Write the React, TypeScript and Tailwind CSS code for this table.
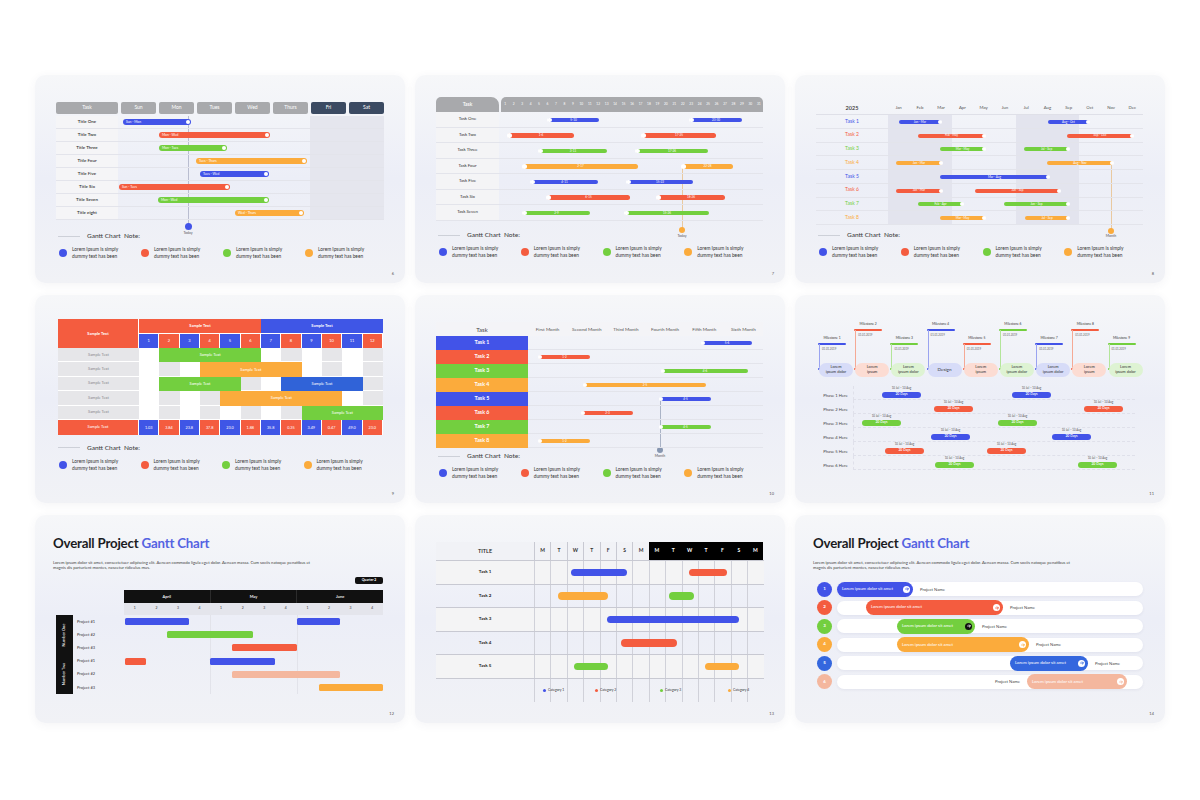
import React from 'react';

const BLUE = 'bg-[#4253e8]';
const RED = 'bg-[#f45c3f]';
const GREEN = 'bg-[#73cf3f]';
const ORANGE = 'bg-[#fbab3c]';
const PEACH = 'bg-[#f4b79e]';
const LEGEND = [BLUE, RED, GREEN, ORANGE];

type Span = { x: number; w: number; c: string; t?: string };

function Card({ page, children }: { page: string; children: React.ReactNode }) {
  return (
    <div className="relative h-[208px] w-[370px] overflow-hidden rounded-[10px] bg-linear-to-b from-[#f6f7f9] via-[#eceef7] to-[#f1f2f6] shadow-[0_2px_10px_rgba(60,60,110,0.06)]">
      {children}
      <span className="absolute bottom-[6px] right-[11px] text-[4px] text-[#555]">{page}</span>
    </div>
  );
}

function Note({ className = '' }: { className?: string }) {
  return (
    <div className={className}>
      <div className="flex h-[8px] items-center">
        <div className="ml-[2px] h-px w-[22px] bg-[#cdd0d8]" />
        <span className="ml-[7px] text-[6.5px] font-medium text-[#444]">Gantt Chart&nbsp; Note:</span>
      </div>
      <div className="mt-[6px] flex">
        {LEGEND.map((c, i) => (
          <div key={i} className="flex w-[83px] items-center gap-[5px] pl-[3px]">
            <span className={`h-[8px] w-[8px] shrink-0 rounded-full ${c}`} />
            <span className="text-[4.8px] leading-[7px] text-[#333]">
              Lorem Ipsum is simply
              <br />
              dummy text has been
            </span>
          </div>
        ))}
      </div>
    </div>
  );
}

function Arrow({ className = '' }: { className?: string }) {
  return (
    <svg viewBox="0 0 10 10" className={className}>
      <path d="M2.6 5h4.6M5.4 3l2 2-2 2" fill="none" stroke="currentColor" strokeWidth="1.3" strokeLinecap="round" strokeLinejoin="round" />
    </svg>
  );
}

/* ---------- slide 6 : week days ---------- */
function WeekSlide() {
  const days = ['Sun', 'Mon', 'Tues', 'Wed', 'Thurs', 'Fri', 'Sat'];
  const rows: [string, Span][] = [
    ['Title One', { x: 88, w: 68, c: BLUE, t: 'Sun - Mon' }],
    ['Title Two', { x: 124, w: 111, c: RED, t: 'Mon - Wed' }],
    ['Title Three', { x: 124, w: 68, c: GREEN, t: 'Mon - Tues' }],
    ['Title Four', { x: 161, w: 111, c: ORANGE, t: 'Tues - Thurs' }],
    ['Title Five', { x: 165, w: 69, c: BLUE, t: 'Tues - Wed' }],
    ['Title Six', { x: 84, w: 111, c: RED, t: 'Sun - Tues' }],
    ['Title Seven', { x: 123, w: 111, c: GREEN, t: 'Mon - Wed' }],
    ['Title eight', { x: 200, w: 69, c: ORANGE, t: 'Wed - Thurs' }],
  ];
  return (
    <Card page="6">
      <div className="w-[349px] pl-[21px] pt-[27px]">
        <div className="flex h-[12px] gap-[3px] text-[5px] text-white">
          <div className="flex w-[62px] items-center justify-center rounded-[2px] bg-[#a8a9ac]">Task</div>
          {days.map((d, i) => (
            <div key={d} className={`flex w-[35px] items-center justify-center rounded-[2px] ${i > 4 ? 'bg-[#3b4a62]' : 'bg-[#a8a9ac]'}`}>
              {d}
            </div>
          ))}
        </div>
        <div className="relative mt-[2px]">
          <div className="absolute left-[254px] top-0 h-[104px] w-[74px] bg-[#e5e6ee]" />
          <div className="absolute left-[131.5px] top-0 h-[110px] w-px bg-[#b9bdd0]" />
          <div className="absolute left-[128.5px] top-[106.5px] h-[7px] w-[7px] rounded-full bg-[#4253e8]" />
          <span className="absolute left-[122px] top-[115px] w-[20px] text-center text-[3.5px] text-[#555]">Today</span>
          {rows.map(([name, b]) => (
            <div key={name} className="relative flex h-[13px] border-b border-[#e3e4eb]">
              <div className="flex w-[62px] items-center justify-center bg-[#f5f5f7] text-[4.5px] font-semibold text-[#333]">{name}</div>
              <div className="relative flex-1">
                <div className={`absolute top-[3px] flex h-[6px] items-center rounded-full pl-[3px] ${b.c}`} style={{ left: b.x - 83, width: b.w }}>
                  <span className="text-[3.3px] text-white">{b.t}</span>
                  <span className="absolute right-[1px] h-[4px] w-[4px] rounded-full bg-white" />
                </div>
              </div>
            </div>
          ))}
        </div>
        <Note className="mt-[12px]" />
      </div>
    </Card>
  );
}

/* ---------- slide 7 : days of month ---------- */
function MonthDaysSlide() {
  const rows: [string, Span[]][] = [
    ['Task One', [{ x: 133, w: 51, c: BLUE, t: '5-10' }, { x: 275, w: 52, c: BLUE, t: '23-30' }]],
    ['Task Two', [{ x: 93, w: 66, c: RED, t: '1-6' }, { x: 227, w: 74, c: RED, t: '17-25' }]],
    ['Task Three', [{ x: 124, w: 68, c: GREEN, t: '3-11' }, { x: 221, w: 72, c: GREEN, t: '17-26' }]],
    ['Task Four', [{ x: 108, w: 115, c: ORANGE, t: '2-17' }, { x: 267, w: 51, c: ORANGE, t: '22-28' }]],
    ['Task Five', [{ x: 116, w: 67, c: BLUE, t: '4-11' }, { x: 212, w: 66, c: BLUE, t: '15-22' }]],
    ['Task Six', [{ x: 132, w: 83, c: RED, t: '6-15' }, { x: 242, w: 68, c: RED, t: '18-26' }]],
    ['Task Seven', [{ x: 108, w: 67, c: GREEN, t: '2-9' }, { x: 210, w: 84, c: GREEN, t: '15-26' }]],
  ];
  const nums = Array.from({ length: 31 }, (_, i) => i + 1);
  return (
    <Card page="7">
      <div className="w-[348px] pl-[21px] pt-[22px]">
        <div className="flex h-[15px]">
          <div className="flex w-[63px] items-center justify-center rounded-tl-[5px] rounded-tr-[8px] bg-[#a8a9ac] text-[5px] font-semibold text-white">
            Task
          </div>
          <div className="ml-[2px] flex flex-1 items-center rounded-t-[5px] bg-[#a8a9ac]">
            {nums.map((n) => (
              <span key={n} className="flex-1 text-center text-[3.2px] text-white">{n}</span>
            ))}
          </div>
        </div>
        <div className="relative">
          <div className="absolute left-[246px] top-[55px] h-[63px] w-px bg-[#e9c9a0]" />
          <div className="absolute left-[243px] top-[115px] h-[6px] w-[6px] rounded-full bg-[#fbab3c]" />
          <span className="absolute left-[236px] top-[122px] w-[20px] text-center text-[3.5px] text-[#555]">Today</span>
          {rows.map(([name, bars]) => (
            <div key={name} className="relative flex h-[15.5px] border-b border-[#e3e4eb]">
              <div className="flex w-[63px] items-center justify-center bg-[#f4f4f6] text-[4.3px] text-[#333]">{name}</div>
              <div className="relative flex-1">
                {bars.map((b) => (
                  <div key={b.x} className={`absolute top-[5.5px] flex h-[4.5px] items-center justify-center rounded-full ${b.c}`} style={{ left: b.x - 84, width: b.w }}>
                    <span className="absolute -left-[1px] h-[4.5px] w-[4.5px] rounded-full bg-white" />
                    <span className="text-[3px] text-white">{b.t}</span>
                  </div>
                ))}
              </div>
            </div>
          ))}
        </div>
        <Note className="mt-[10.5px]" />
      </div>
    </Card>
  );
}

/* ---------- slide 8 : months of a year ---------- */
function YearSlide() {
  const months = ['Jan', 'Feb', 'Mar', 'Apr', 'May', 'Jun', 'Jul', 'Aug', 'Sep', 'Oct', 'Nov', 'Dec'];
  const rows: [string, string, Span[]][] = [
    ['Task 1', 'text-[#4253e8]', [{ x: 104, w: 42, c: BLUE, t: 'Jan - Mar' }, { x: 253, w: 41, c: BLUE, t: 'Aug - Oct' }]],
    ['Task 2', 'text-[#f45c3f]', [{ x: 123, w: 67, c: RED, t: 'Feb - May' }, { x: 272, w: 66, c: RED, t: 'Sep - Dec' }]],
    ['Task 3', 'text-[#73cf3f]', [{ x: 145, w: 45, c: GREEN, t: 'Mar - May' }, { x: 229, w: 45, c: GREEN, t: 'Jul - Sep' }]],
    ['Task 4', 'text-[#fbab3c]', [{ x: 101, w: 46, c: ORANGE, t: 'Jan - Mar' }, { x: 252, w: 66, c: ORANGE, t: 'Aug - Nov' }]],
    ['Task 5', 'text-[#4253e8]', [{ x: 145, w: 109, c: BLUE, t: 'Mar - Aug' }]],
    ['Task 6', 'text-[#f45c3f]', [{ x: 101, w: 46, c: RED, t: 'Jan - Mar' }, { x: 180, w: 85, c: RED, t: 'Jun - Sep' }]],
    ['Task 7', 'text-[#73cf3f]', [{ x: 123, w: 45, c: GREEN, t: 'Feb - Apr' }, { x: 209, w: 65, c: GREEN, t: 'Jun - Sep' }]],
    ['Task 8', 'text-[#fbab3c]', [{ x: 145, w: 45, c: ORANGE, t: 'Mar - May' }, { x: 230, w: 44, c: ORANGE, t: 'Jul - Sep' }]],
  ];
  return (
    <Card page="8">
      <div className="w-[348px] pl-[21px] pt-[27px]">
        <div className="flex h-[13px] items-center border-b border-[#dfe0e8]">
          <div className="w-[72px] text-center text-[5.5px] font-semibold text-[#333]">2025</div>
          {months.map((m) => (
            <span key={m} className="flex-1 text-center text-[4.3px] text-[#555]">{m}</span>
          ))}
        </div>
        <div className="relative">
          <div className="absolute left-[72px] top-0 h-[110px] w-[64px] bg-[#e3e4ee]" />
          <div className="absolute left-[200px] top-0 h-[110px] w-[63px] bg-[#e3e4ee]" />
          <div className="absolute left-[295px] top-[48px] h-[68px] w-px bg-[#e9c9a0]" />
          <div className="absolute left-[292px] top-[113px] h-[6px] w-[6px] rounded-full bg-[#fbab3c]" />
          <span className="absolute left-[285px] top-[119px] w-[20px] text-center text-[3.5px] text-[#555]">Month</span>
          {rows.map(([name, tc, bars]) => (
            <div key={name} className="relative flex h-[13.75px] border-b border-[#e3e4eb]">
              <div className={`flex w-[72px] items-center justify-center text-[5px] ${tc}`}>{name}</div>
              <div className="relative flex-1">
                {bars.map((b) => (
                  <div key={b.x} className={`absolute top-[4.9px] flex h-[4px] items-center justify-center rounded-full ${b.c}`} style={{ left: b.x - 93, width: b.w }}>
                    <span className="text-[3px] text-white">{b.t}</span>
                    <span className="absolute -right-[1px] h-[4px] w-[4px] rounded-full bg-white" />
                  </div>
                ))}
              </div>
            </div>
          ))}
        </div>
        <Note className="mt-[6px]" />
      </div>
    </Card>
  );
}

/* ---------- slide 9 : table ---------- */
function TableSlide() {
  const cw = 244 / 12;
  const rows: { s: number; n: number; c: string }[][] = [
    [{ s: 2, n: 5, c: GREEN }],
    [{ s: 4, n: 5, c: ORANGE }],
    [{ s: 2, n: 4, c: GREEN }, { s: 8, n: 4, c: 'bg-[#3063d8]' }],
    [{ s: 5, n: 6, c: ORANGE }],
    [{ s: 9, n: 4, c: GREEN }],
  ];
  const foot = ['1.03', '3.84', '23.8', '37.8', '23.0', '1.88', '35.8', '0.35', '3.49', '0.47', '49.0', '23.0'];
  return (
    <Card page="9">
      <div className="pl-[23px] pt-[24px]">
        <div className="flex w-[325px] text-[4px] font-bold text-white">
          <div className="flex h-[29px] w-[81px] items-center justify-center border-r border-white bg-[#f45c3f]">Sample Text</div>
          <div className="flex w-[244px] flex-col">
            <div className="flex h-[14px]">
              <div className="flex flex-1 items-center justify-center bg-[#f45c3f]">Sample Text</div>
              <div className="flex flex-1 items-center justify-center bg-[#3f56e6]">Sample Text</div>
            </div>
            <div className="flex h-[15px] border-t border-white">
              {foot.map((_, i) => (
                <div key={i} className={`flex flex-1 items-center justify-center border-r border-white font-normal ${i % 2 === 0 ? 'bg-[#3f56e6]' : 'bg-[#f45c3f]'}`}>
                  {i + 1}
                </div>
              ))}
            </div>
          </div>
        </div>
        {rows.map((bars, r) => (
          <div key={r} className="flex h-[14.4px] w-[325px]">
            <div className="flex w-[81px] items-center justify-center border-b border-white bg-[#e6e6e9] text-[4px] text-[#8a8a8f]">Sample Text</div>
            <div className="relative flex w-[244px]">
              {foot.map((_, i) => (
                <div key={i} className={`flex-1 border-b border-white ${i % 2 === 0 ? 'bg-white' : 'bg-[#e6e6e9]'}`} />
              ))}
              {bars.map((b) => (
                <div key={b.s} className={`absolute top-0 flex h-[14.4px] items-center justify-center text-[4px] text-white ${b.c}`} style={{ left: (b.s - 1) * cw, width: b.n * cw }}>
                  Sample Text
                </div>
              ))}
            </div>
          </div>
        ))}
        <div className="flex h-[15px] w-[325px] text-[3.8px] text-white">
          <div className="flex w-[81px] items-center justify-center border-r border-white bg-[#f45c3f] text-[4px]">Sample Text</div>
          {foot.map((v, i) => (
            <div key={i} className={`flex flex-1 items-center justify-center border-r border-white ${i % 2 === 0 ? 'bg-[#3f56e6]' : 'bg-[#f45c3f]'}`}>
              {v}
            </div>
          ))}
        </div>
        <div className="-ml-[2px] w-[326px]">
          <Note className="mt-[9px]" />
        </div>
      </div>
    </Card>
  );
}

/* ---------- slide 10 : six months ---------- */
function SixMonthSlide() {
  const months = ['First Month', 'Second Month', 'Third Month', 'Fourth Month', 'Fifth Month', 'Sixth Month'];
  const rows: [string, string, Span][] = [
    ['Task 1', BLUE, { x: 287, w: 50, c: BLUE, t: '5-6' }],
    ['Task 2', RED, { x: 124, w: 51, c: RED, t: '1-2' }],
    ['Task 3', GREEN, { x: 247, w: 86, c: GREEN, t: '4-6' }],
    ['Task 4', ORANGE, { x: 169, w: 122, c: ORANGE, t: '2-5' }],
    ['Task 5', BLUE, { x: 245, w: 51, c: BLUE, t: '4-5' }],
    ['Task 6', RED, { x: 167, w: 51, c: RED, t: '2-3' }],
    ['Task 7', GREEN, { x: 245, w: 51, c: GREEN, t: '4-5' }],
    ['Task 8', ORANGE, { x: 124, w: 51, c: ORANGE, t: '1-2' }],
  ];
  return (
    <Card page="10">
      <div className="w-[348px] pl-[21px] pt-[27px]">
        <div className="flex h-[14px] items-center bg-[#f4f4f7]">
          <div className="w-[92px] text-center text-[6px] text-[#444]">Task</div>
          {months.map((m) => (
            <span key={m} className="flex-1 text-center text-[4.6px] text-[#555]">{m}</span>
          ))}
        </div>
        <div className="relative">
          <div className="absolute left-[224px] top-[63px] h-[51px] w-px bg-[#aab3c6]" />
          <div className="absolute left-[221px] top-[111px] h-[6px] w-[6px] rounded-full bg-[#8796b0]" />
          <span className="absolute left-[214px] top-[118px] w-[20px] text-center text-[3.5px] text-[#555]">Month</span>
          {rows.map(([name, bg, b]) => (
            <div key={name} className="relative flex h-[14px]">
              <div className={`flex w-[92px] items-center justify-center text-[5.3px] font-bold text-white ${bg}`}>{name}</div>
              <div className="relative flex-1 border-b border-[#e3e4eb]">
                <div className={`absolute top-[5px] flex h-[4px] items-center justify-center rounded-full ${b.c}`} style={{ left: b.x - 113, width: b.w }}>
                  <span className="absolute -left-[1px] h-[4px] w-[4px] rounded-full bg-white" />
                  <span className="text-[3px] text-white">{b.t}</span>
                </div>
              </div>
            </div>
          ))}
        </div>
        <Note className="mt-[4px]" />
      </div>
    </Card>
  );
}

/* ---------- slide 11 : milestones ---------- */
function MilestoneSlide() {
  const ms = [
    { high: false, bar: BLUE, line: 'bg-[#9aa3f0]', pill: 'bg-[#d7dcf8]', text: ['Lorem', 'ipsum dolor'] },
    { high: true, bar: RED, line: 'bg-[#f5a995]', pill: 'bg-[#fcdcd3]', text: ['Lorem', 'ipsum'] },
    { high: false, bar: GREEN, line: 'bg-[#b3e59a]', pill: 'bg-[#def3d3]', text: ['Lorem', 'ipsum dolor'] },
    { high: true, bar: BLUE, line: 'bg-[#9aa3f0]', pill: 'bg-[#d7dcf8]', text: ['Design'] },
    { high: false, bar: RED, line: 'bg-[#f5a995]', pill: 'bg-[#fcdcd3]', text: ['Lorem', 'ipsum'] },
    { high: true, bar: GREEN, line: 'bg-[#b3e59a]', pill: 'bg-[#def3d3]', text: ['Lorem', 'ipsum dolor'] },
    { high: false, bar: BLUE, line: 'bg-[#9aa3f0]', pill: 'bg-[#d7dcf8]', text: ['Lorem', 'ipsum dolor'] },
    { high: true, bar: RED, line: 'bg-[#f5a995]', pill: 'bg-[#fcdcd3]', text: ['Lorem', 'ipsum'] },
    { high: false, bar: GREEN, line: 'bg-[#b3e59a]', pill: 'bg-[#def3d3]', text: ['Lorem', 'ipsum dolor'] },
  ];
  const phases: [string, number[]][] = [
    [BLUE, [86, 216]],
    [RED, [138, 288]],
    [GREEN, [66, 202]],
    [BLUE, [135, 256]],
    [RED, [89, 191]],
    [GREEN, [139, 282]],
  ];
  return (
    <Card page="11">
      <div className="pl-[23px] pt-[27px]">
        <div className="flex">
          {ms.map((m, i) => {
            const lab = m.high ? 0 : 14;
            return (
              <div key={i} className="relative h-[55px] w-[36.2px]">
                <span className="absolute left-0 w-[28px] text-center text-[3.3px] leading-[4px] text-[#333]" style={{ top: lab }}>
                  Milestone {i + 1}
                </span>
                <div className={`absolute left-0 h-[2.5px] w-[28px] rounded-full ${m.bar}`} style={{ top: lab + 6.75 }} />
                <span className="absolute left-[4px] text-[2.8px] leading-[3px] text-[#666]" style={{ top: lab + 11.5 }}>
                  01.01.2019
                </span>
                <div className={`absolute left-[1px] w-[0.7px] ${m.line}`} style={{ top: lab + 8, height: 47 - lab - 8 }} />
                <div className={`absolute left-0 top-[46px] h-[2px] w-[2px] rounded-full ${m.bar}`} />
                <div className={`absolute left-[1px] top-[41px] flex h-[13.5px] w-[34px] flex-col items-center justify-center rounded-full text-[4px] leading-[4.6px] text-[#333] ${m.pill}`}>
                  {m.text.map((t) => (
                    <span key={t} className={m.text.length === 1 ? 'text-[4.6px]' : ''}>{t}</span>
                  ))}
                </div>
              </div>
            );
          })}
        </div>
        <div className="mt-[9px] w-[317px]">
          {phases.map(([c, xs], r) => (
            <div key={r} className="flex h-[14px]">
              <div className="w-[35px] pt-[6.5px] text-center text-[4.2px] leading-[5px] text-[#444]">Phase {r + 1} Here</div>
              <div className="relative flex-1 border-b border-l border-dashed border-[#dfe0ea]">
                {xs.map((x) => (
                  <React.Fragment key={x}>
                    <span className="absolute top-[0.5px] w-[39px] text-center text-[2.9px] leading-[3.5px] text-[#555]" style={{ left: x - 58 }}>
                      10 Jul – 10 Aug
                    </span>
                    <div className={`absolute top-[6.25px] flex h-[5.5px] w-[39px] items-center justify-center rounded-[3px] text-[3.4px] font-semibold text-white ${c}`} style={{ left: x - 58 }}>
                      20 Days
                    </div>
                  </React.Fragment>
                ))}
              </div>
            </div>
          ))}
        </div>
      </div>
    </Card>
  );
}

function Title() {
  return (
    <>
      <h2 className="text-[13.3px] font-bold leading-[14px] tracking-[-0.2px] text-[#1b1b1f]">
        Overall Project <span className="text-[#5563e2]">Gantt Chart</span>
      </h2>
      <p className="mt-[9.5px] text-[4.2px] leading-[5px] text-[#444]">
        Lorem ipsum dolor sit amet, consectetuer adipiscing elit. Aenean commodo ligula eget dolor. Aenean massa. Cum sociis natoque penatibus et
        <br />
        magnis dis parturient montes, nascetur ridiculus mus.
      </p>
    </>
  );
}

/* ---------- slide 12 : quarter ---------- */
function QuarterSlide() {
  const rows: Span[][] = [
    [{ x: 90, w: 64, c: BLUE }, { x: 262, w: 43, c: BLUE }],
    [{ x: 132, w: 86, c: GREEN }],
    [{ x: 197, w: 65, c: RED }],
    [{ x: 90, w: 21, c: RED }, { x: 175, w: 65, c: BLUE }],
    [{ x: 197, w: 108, c: PEACH }],
    [{ x: 284, w: 64, c: ORANGE }],
  ];
  const weeks = [1, 2, 3, 4, 1, 2, 3, 4, 1, 2, 3, 4];
  return (
    <Card page="12">
      <div className="w-[348px] pl-[18px] pt-[21px]">
        <Title />
        <div className="mt-[7.5px] flex justify-end">
          <span className="flex h-[7px] w-[28px] items-center justify-center rounded-[2px] bg-[#111] text-[3.4px] font-bold text-white">Quarter 2</span>
        </div>
        <div className="ml-[71px] mt-[6px] flex h-[13px] w-[259px] bg-[#111] text-[4px] font-semibold text-white">
          {['April', 'May', 'June'].map((m) => (
            <div key={m} className="flex flex-1 items-center justify-center border-r border-[#2c2c2c] last:border-r-0">{m}</div>
          ))}
        </div>
        <div className="ml-[71px] flex h-[12px] w-[259px] bg-[#e4e5ec]">
          {weeks.map((w, i) => (
            <span key={i} className="flex flex-1 items-center justify-center text-[3.4px] text-[#333]">{w}</span>
          ))}
        </div>
        <div className="flex">
          <div className="ml-[3px] flex w-[17px] flex-col bg-[#111]">
            {['Number One', 'Number Two'].map((t) => (
              <div key={t} className="flex flex-1 items-center justify-center">
                <span className="-rotate-90 whitespace-nowrap text-[4px] text-white">{t}</span>
              </div>
            ))}
          </div>
          <div className="w-[51px] pl-[4px]">
            {rows.map((_, i) => (
              <div key={i} className="flex h-[13.2px] items-center text-[4px] text-[#333]">Project #{(i % 3) + 1}</div>
            ))}
          </div>
          <div className="relative w-[259px]">
            <div className="absolute left-[86px] top-0 h-full w-px bg-[#e2e3ea]" />
            <div className="absolute left-[173px] top-0 h-full w-px bg-[#e2e3ea]" />
            {rows.map((bars, i) => (
              <div key={i} className="relative h-[13.2px]">
                {bars.map((b) => (
                  <div key={b.x} className={`absolute top-[3.1px] h-[7px] rounded-[1.5px] ${b.c}`} style={{ left: b.x - 89, width: b.w }} />
                ))}
              </div>
            ))}
          </div>
        </div>
      </div>
    </Card>
  );
}

/* ---------- slide 13 : two weeks ---------- */
function TwoWeekSlide() {
  const days = ['M', 'T', 'W', 'T', 'F', 'S', 'M', 'M', 'T', 'W', 'T', 'F', 'S', 'M'];
  const rows: Span[][] = [
    [{ x: 156, w: 56, c: BLUE }, { x: 274, w: 38, c: RED }],
    [{ x: 143, w: 50, c: ORANGE }, { x: 254, w: 25, c: GREEN }],
    [{ x: 192, w: 132, c: BLUE }],
    [{ x: 206, w: 56, c: RED }],
    [{ x: 159, w: 34, c: GREEN }, { x: 290, w: 34, c: ORANGE }],
  ];
  const cats: [string, number][] = [
    [BLUE, 10],
    [RED, 62],
    [GREEN, 127],
    [ORANGE, 195],
  ];
  return (
    <Card page="13">
      <div className="pl-[21px] pt-[27px]">
        <div className="flex h-[19px] w-[328px] border-b border-[#c8c9d2]">
          <div className="flex w-[98px] items-center justify-center bg-[#f1f2f6] text-[5.5px] font-semibold text-[#222]">TITLE</div>
          {days.map((d, i) => (
            <div key={i} className={`flex w-[16.4px] items-center justify-center text-[5px] font-bold ${i > 6 ? 'bg-black text-white' : 'border-l border-[#c8c9d2] bg-[#f1f2f6] text-[#333]'}`}>
              {d}
            </div>
          ))}
        </div>
        {rows.map((bars, r) => (
          <div key={r} className={`flex h-[23.6px] w-[328px] border-b border-[#c8c9d2] ${r % 2 === 0 ? 'bg-[#f4f4f5]' : ''}`}>
            <div className="flex w-[98px] items-center justify-center text-[4.5px] font-bold text-[#222]">Task {r + 1}</div>
            <div className="relative flex">
              {days.map((_, i) => (
                <div key={i} className="w-[16.4px] border-l border-[#d0d1d9]" />
              ))}
              {bars.map((b) => (
                <div key={b.x} className={`absolute top-[7.5px] h-[7.5px] rounded-full ${b.c}`} style={{ left: b.x - 119, width: b.w }} />
              ))}
            </div>
          </div>
        ))}
        <div className="flex h-[23px] w-[328px]">
          <div className="w-[98px]" />
          <div className="relative flex">
            {days.map((_, i) => (
              <div key={i} className="w-[16.4px] border-l border-[#d0d1d9]" />
            ))}
            {cats.map(([c, x], i) => (
              <div key={c} className="absolute top-[9px] flex items-center gap-[2px]" style={{ left: x - 1.5 }}>
                <span className={`h-[3.5px] w-[3.5px] rounded-full ${c}`} />
                <span className="text-[3.4px] text-[#333]">Category {i + 1}</span>
              </div>
            ))}
          </div>
        </div>
      </div>
    </Card>
  );
}

/* ---------- slide 14 : project pills ---------- */
function PillSlide() {
  const rows = [
    { nc: BLUE, x: 42, w: 76, dark: false, ac: 'text-[#4253e8]', before: false },
    { nc: RED, x: 71, w: 137, dark: false, ac: 'text-[#f45c3f]', before: false },
    { nc: GREEN, x: 102, w: 78, dark: true, ac: 'text-white', before: false },
    { nc: ORANGE, x: 102, w: 132, dark: false, ac: 'text-[#fbab3c]', before: false },
    { nc: 'bg-[#3467de]', x: 215, w: 78, dark: false, ac: 'text-[#3467de]', before: false },
    { nc: PEACH, x: 232, w: 100, dark: false, ac: 'text-[#f4b79e]', before: true },
  ];
  return (
    <Card page="14">
      <div className="w-[348px] pl-[18px] pt-[21px]">
        <Title />
        <div className="mt-[12px] flex flex-col gap-[3.6px]">
          {rows.map((r, i) => (
            <div key={i} className="flex h-[15px] items-center">
              <span className={`ml-[4px] flex h-[15px] w-[15px] items-center justify-center rounded-full text-[4.5px] font-bold text-white ${r.nc}`}>{i + 1}</span>
              <div className="relative ml-[5px] h-[14px] w-[306px] rounded-full bg-white shadow-[0_1px_3px_rgba(60,60,110,0.07)]">
                <div className={`absolute -top-[0.5px] flex h-[15px] items-center rounded-full pl-[5px] ${r.nc}`} style={{ left: r.x - 42, width: r.w }}>
                  <span className="text-[4.3px] text-white">Lorem ipsum dolor sit amet</span>
                  <span className={`absolute right-[3px] flex h-[7px] w-[7px] items-center justify-center rounded-full ${r.dark ? 'bg-[#111]' : 'bg-white'}`}>
                    <Arrow className={`h-[6px] w-[6px] ${r.ac}`} />
                  </span>
                </div>
                <span
                  className="absolute top-[4.5px] text-[4.2px] leading-[5px] text-[#444]"
                  style={r.before ? { right: 306 - (r.x - 42) + 7 } : { left: r.x - 42 + r.w + 7 }}
                >
                  Project Name
                </span>
              </div>
            </div>
          ))}
        </div>
      </div>
    </Card>
  );
}

export default function App() {
  return (
    <div className="h-[800px] w-[1200px] overflow-hidden bg-white font-['Lato','Liberation_Sans',sans-serif]">
      <div className="grid grid-cols-[repeat(3,370px)] gap-x-[10px] gap-y-[12px] pl-[35px] pt-[75px]">
        <WeekSlide />
        <MonthDaysSlide />
        <YearSlide />
        <TableSlide />
        <SixMonthSlide />
        <MilestoneSlide />
        <QuarterSlide />
        <TwoWeekSlide />
        <PillSlide />
      </div>
    </div>
  );
}
